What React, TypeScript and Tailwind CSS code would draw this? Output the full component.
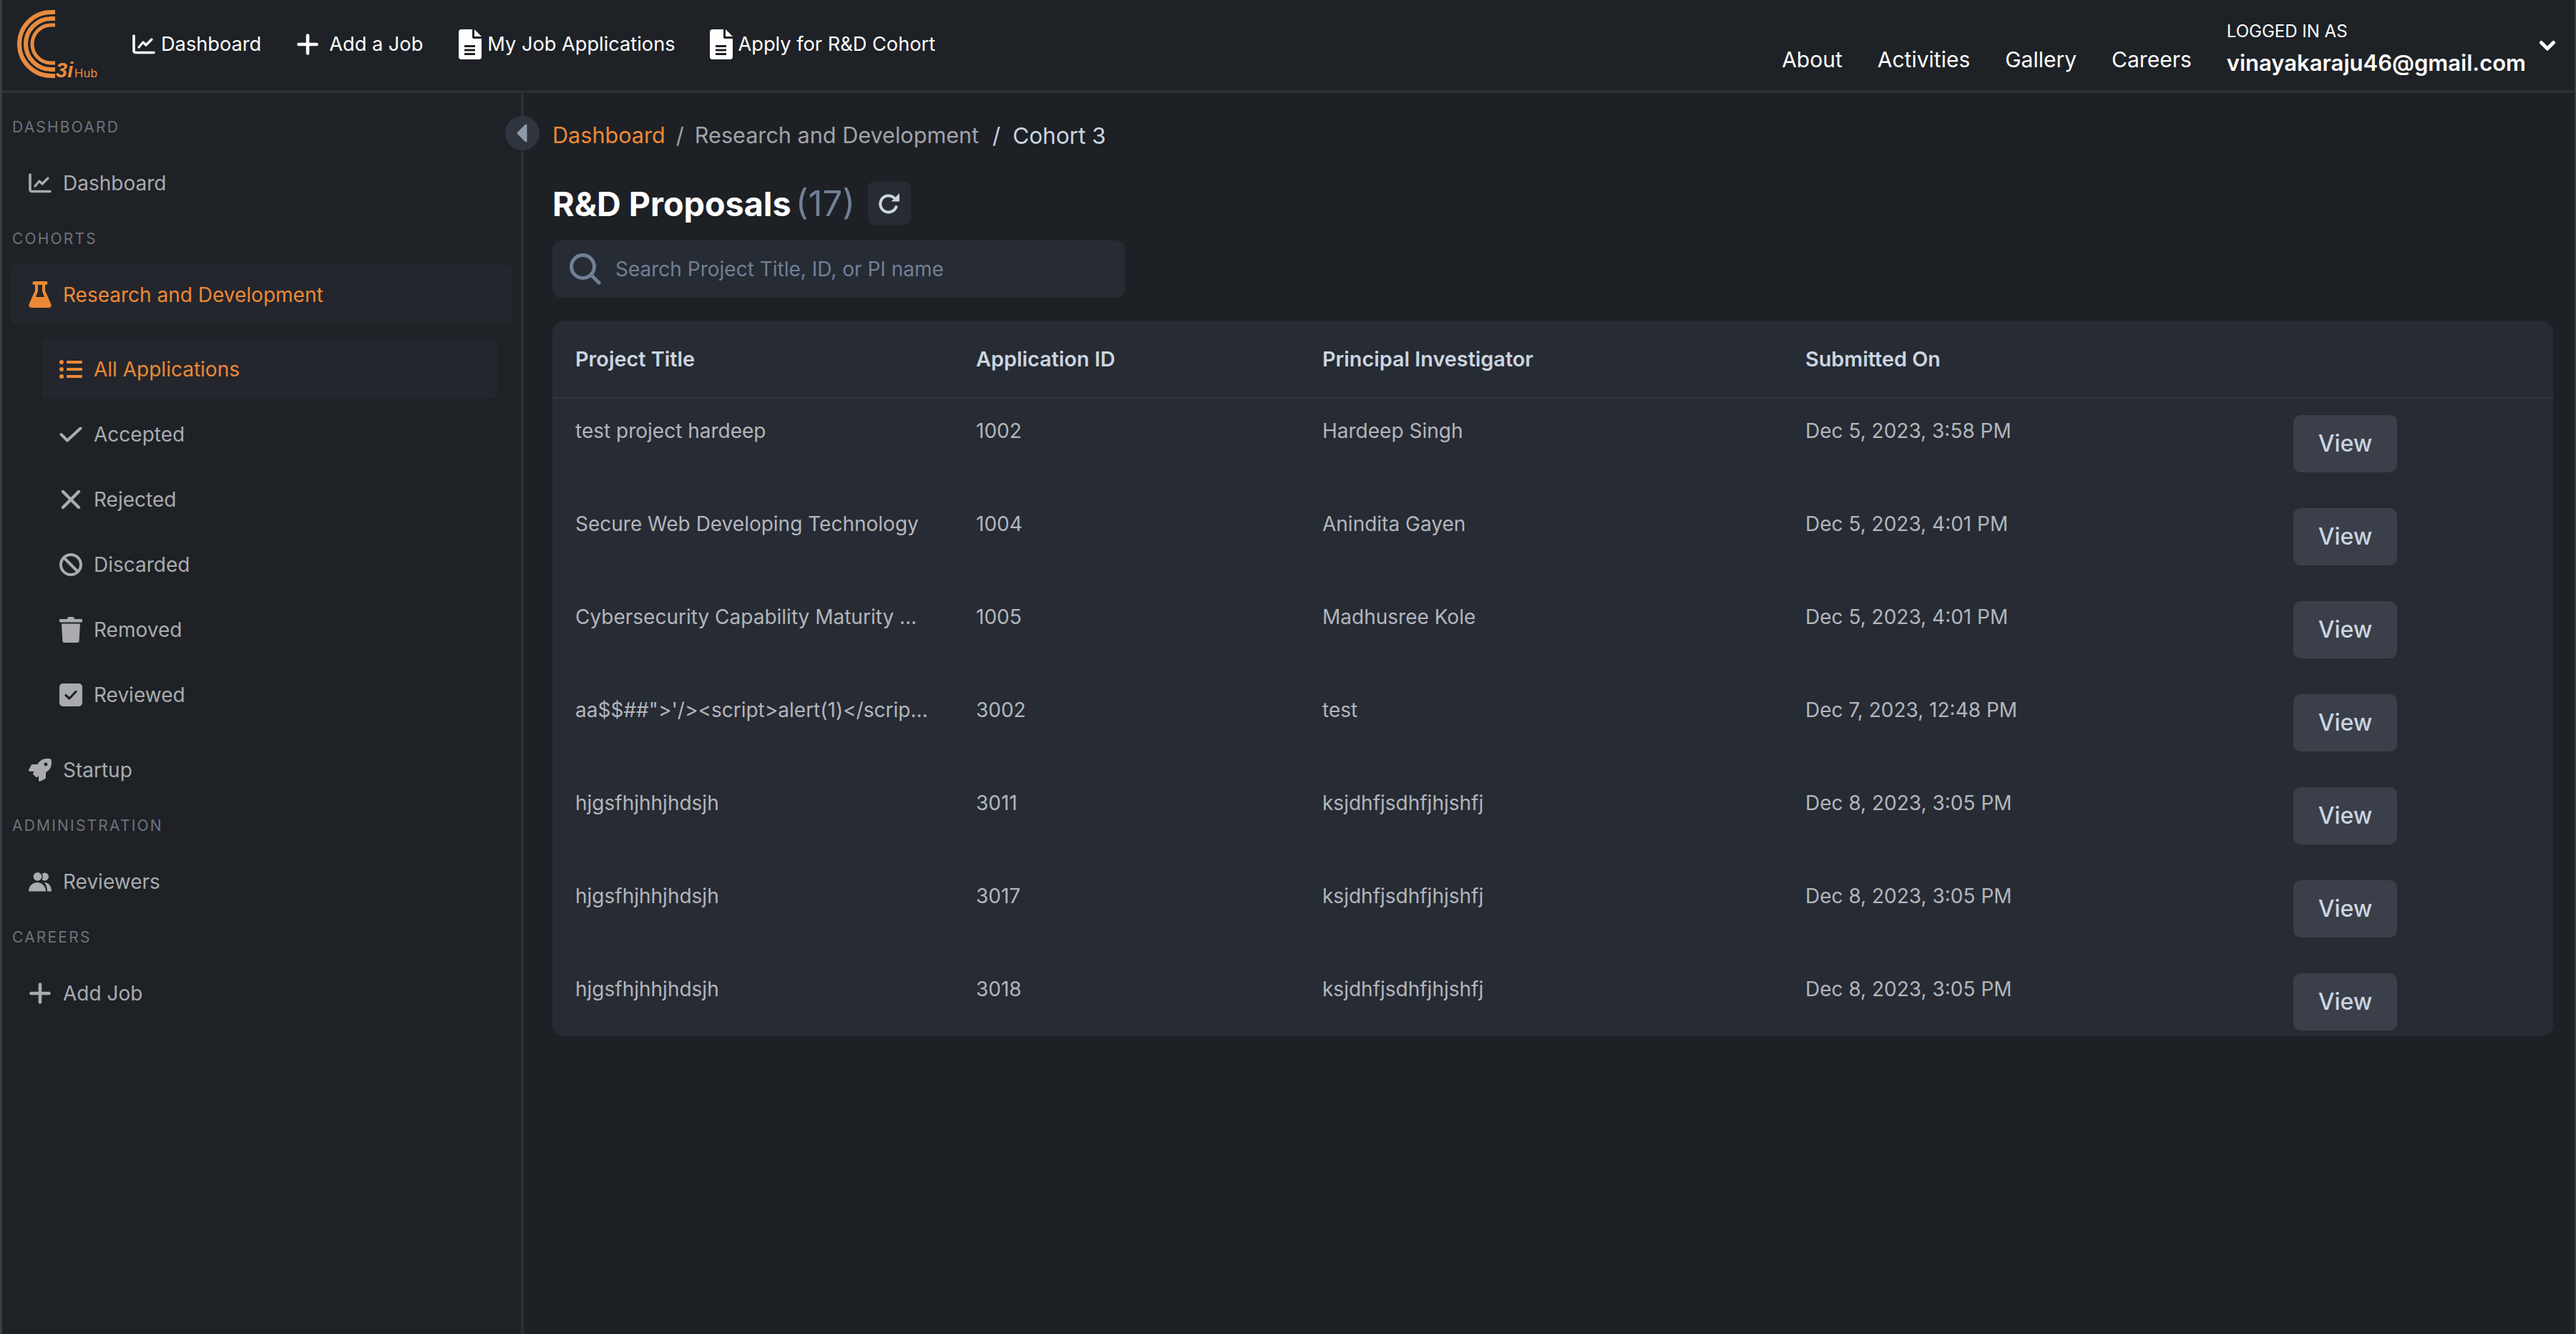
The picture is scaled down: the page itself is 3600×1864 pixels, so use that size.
import React from 'react'
import { FaListUl, FaRocket } from 'react-icons/fa'

const ROWS = [
  { title: 'test project hardeep', id: '1002', pi: 'Hardeep Singh', date: 'Dec 5, 2023, 3:58 PM' },
  { title: 'Secure Web Developing Technology', id: '1004', pi: 'Anindita Gayen', date: 'Dec 5, 2023, 4:01 PM' },
  { title: 'Cybersecurity Capability Maturity Model for Indian Organisations', id: '1005', pi: 'Madhusree Kole', date: 'Dec 5, 2023, 4:01 PM' },
  { title: `aa$$##">'/><script>alert(1)</script>`, id: '3002', pi: 'test', date: 'Dec 7, 2023, 12:48 PM' },
  { title: 'hjgsfhjhhjhdsjh', id: '3011', pi: 'ksjdhfjsdhfjhjshfj', date: 'Dec 8, 2023, 3:05 PM' },
  { title: 'hjgsfhjhhjhdsjh', id: '3017', pi: 'ksjdhfjsdhfjhjshfj', date: 'Dec 8, 2023, 3:05 PM' },
  { title: 'hjgsfhjhhjhdsjh', id: '3018', pi: 'ksjdhfjsdhfjhjshfj', date: 'Dec 8, 2023, 3:05 PM' },
]

function ChartIcon() {
  return (
    <svg width="32" height="28" viewBox="0 0 32 28" fill="none" stroke="currentColor" strokeLinecap="round" strokeLinejoin="round">
      <path d="M2 2 V23 a2.5 2.5 0 0 0 2.5 2.5 H30" strokeWidth="3.6" />
      <path d="M9 18 L15 11 L19 15 L27 7" strokeWidth="3.2" />
    </svg>
  )
}

function PlusIcon() {
  return (
    <svg width="30" height="30" viewBox="0 0 30 30" fill="none" stroke="currentColor" strokeWidth="4.6" strokeLinecap="round">
      <path d="M15 2.5 V27.5 M2.5 15 H27.5" />
    </svg>
  )
}

function FileIcon() {
  return (
    <svg width="32" height="42" viewBox="0 0 32 42" className="shrink-0">
      <path d="M4 0 H19 V11 a2 2 0 0 0 2 2 H32 V38 a4 4 0 0 1 -4 4 H4 a4 4 0 0 1 -4 -4 V4 a4 4 0 0 1 4 -4 Z M22 0 L32 10 H22 Z" fill="currentColor" />
      <path d="M8 22 H23 V25 H8 Z M8 27.5 H23 V30.5 H8 Z M8 33 H23 V36 H8 Z" fill="#1e2126" />
    </svg>
  )
}

function FlaskIcon() {
  return (
    <svg width="32" height="37" viewBox="0 0 32 37">
      <path
        fillRule="evenodd"
        fill="currentColor"
        d="M8 0 H24 a2.5 2.5 0 0 1 0 5 H23 V13 L31.4 32 a3.5 3.5 0 0 1 -3 5 H3.6 a3.5 3.5 0 0 1 -3 -5 L9 13 V5 H8 a2.5 2.5 0 0 1 0 -5 Z M13 5 V14 L10 22 H22 L19 14 V5 Z"
      />
    </svg>
  )
}

function CheckIcon() {
  return (
    <svg width="32" height="22" viewBox="0 0 32 22" fill="none" stroke="currentColor" strokeWidth="4" strokeLinecap="round" strokeLinejoin="round">
      <path d="M2.5 11 L11 19.5 L29.5 2.5" />
    </svg>
  )
}

function XIcon() {
  return (
    <svg width="28" height="28" viewBox="0 0 28 28" fill="none" stroke="currentColor" strokeWidth="4.4" strokeLinecap="round">
      <path d="M3 3 L25 25 M25 3 L3 25" />
    </svg>
  )
}

function BanIcon() {
  return (
    <svg width="32" height="32" viewBox="0 0 32 32" fill="none" stroke="currentColor" strokeWidth="4">
      <circle cx="16" cy="16" r="14" />
      <path d="M6.5 6.5 L25.5 25.5" />
    </svg>
  )
}

function TrashIcon() {
  return (
    <svg width="32" height="36" viewBox="0 0 32 36" fill="currentColor">
      <path d="M11 3 Q11 0 14 0 H18 Q21 0 21 3 H30.5 a2 2 0 0 1 0 4.5 H1.5 a2 2 0 0 1 0 -4.5 Z" />
      <path d="M3 9.5 H29 L27.6 33.5 a2.5 2.5 0 0 1 -2.5 2.5 H6.9 a2.5 2.5 0 0 1 -2.5 -2.5 Z" />
    </svg>
  )
}

function CheckSquareIcon() {
  return (
    <svg width="32" height="32" viewBox="0 0 32 32">
      <rect width="32" height="32" rx="5" fill="currentColor" />
      <path d="M9 16.5 L14 21 L23 11.5" fill="none" stroke="#1e2126" strokeWidth="3.2" strokeLinecap="round" strokeLinejoin="round" />
    </svg>
  )
}

function UsersIcon() {
  return (
    <svg width="32" height="28" viewBox="0 0 32 28" fill="currentColor">
      <circle cx="22.5" cy="7" r="5.5" />
      <path d="M22 15 C28 15 32 20 32 27.5 H26 C26 22 24.5 18 22 15 Z" />
      <circle cx="12.5" cy="6.8" r="6.6" stroke="#1e2126" strokeWidth="1.4" />
      <path d="M0 27.5 C0 20 5.5 15 12 15 C18.5 15 24 20 24 27.5 Z" />
    </svg>
  )
}

const SUB_ITEMS = [
  { label: 'All Applications', icon: <FaListUl size={32} />, active: true },
  { label: 'Accepted', icon: <CheckIcon /> },
  { label: 'Rejected', icon: <XIcon /> },
  { label: 'Discarded', icon: <BanIcon /> },
  { label: 'Removed', icon: <TrashIcon /> },
  { label: 'Reviewed', icon: <CheckSquareIcon /> },
]

function Logo() {
  return (
    <svg width="140" height="126" viewBox="3 0 140 126" className="shrink-0">
      <g fill="none" stroke="#e88b3f">
        <path d="M77 17 H71.5 A44.5 44.5 0 0 0 71.5 106 H77" strokeWidth="6" />
        <path d="M77 26 H71.5 A35.5 35.5 0 0 0 71.5 97 H77" strokeWidth="6" />
        <path d="M77 35 H71.5 A26.5 26.5 0 0 0 71.5 88 H77" strokeWidth="5" />
      </g>
      <text x="78" y="108" fill="#e88b3f" fontFamily="Liberation Sans" fontWeight="700" fontSize="29" fontStyle="italic">
        3i
      </text>
      <text x="104" y="108" fill="#e88b3f" fontFamily="Liberation Sans" fontSize="17" letterSpacing="0.4">
        Hub
      </text>
    </svg>
  )
}

function SectionLabel({ children }: { children: React.ReactNode }) {
  return (
    <div className="h-[73px] flex items-center pl-[14px] text-[21px] tracking-[2.2px] text-[#70737a]">
      {children}
    </div>
  )
}

function NavItem({ icon, label, active }: { icon: React.ReactNode; label: string; active?: boolean }) {
  return (
    <div
      className={`h-[83px] ml-[12px] mr-[12px] pl-[25px] flex items-center gap-[16px] rounded-[6px] text-[28px] ${
        active ? 'bg-[#23262c] text-[#ed8936]' : 'text-[#a9abaf]'
      }`}
    >
      <span className="w-[32px] flex justify-center shrink-0">{icon}</span>
      {label}
    </div>
  )
}

function SubItem({ icon, label, active }: { icon: React.ReactNode; label: string; active?: boolean }) {
  return (
    <div
      className={`h-[83px] pl-[25px] flex items-center gap-[16px] rounded-[6px] text-[28px] ${
        active ? 'bg-[#23262c] text-[#ed8936]' : 'text-[#a9abaf]'
      }`}
    >
      <span className="w-[32px] flex justify-center shrink-0">{icon}</span>
      {label}
    </div>
  )
}

export default function App() {
  return (
    <div className="h-[1864px] flex flex-col overflow-hidden bg-[#1d2025] border-l-[3px] border-r-[2px] border-[#3a3d44] font-['Inter',sans-serif]">
      <header className="h-[130px] shrink-0 flex justify-between bg-[#1e2126] border-b-[4px] border-[#2a2e35] text-white">
        <div className="flex items-start">
          <Logo />
          <nav className="flex items-center h-[126px] pl-[42px] pb-[2px] text-[27.2px]">
            <div className="flex items-center gap-[8px] mr-[50px]">
              <ChartIcon />
              Dashboard
            </div>
            <div className="flex items-center gap-[15px] mr-[50px]">
              <PlusIcon />
              Add a Job
            </div>
            <div className="flex items-center gap-[8px] mr-[48px]">
              <FileIcon />
              My Job Applications
            </div>
            <div className="flex items-center gap-[8px]">
              <FileIcon />
              Apply for R&amp;D Cohort
            </div>
          </nav>
        </div>
        <div className="flex items-start">
          <div className="flex gap-[49px] pt-[63px] text-[30px] leading-[40px]">
            <span>About</span>
            <span>Activities</span>
            <span>Gallery</span>
            <span>Careers</span>
          </div>
          <div className="ml-[49px] pt-[30px]">
            <div className="text-[24px] leading-[28px]">LOGGED IN AS</div>
            <div className="mt-[10px] text-[31px] leading-[40px] font-semibold">vinayakaraju46@gmail.com</div>
          </div>
          <svg width="24" height="16" viewBox="0 0 24 16" fill="none" stroke="currentColor" strokeWidth="5" strokeLinecap="round" strokeLinejoin="round" className="ml-[18px] mr-[26px] mt-[56px]">
            <path d="M3.5 3.5 L12 12 L20.5 3.5" />
          </svg>
        </div>
      </header>

      <div className="flex flex-1 min-h-0">
        <aside className="relative w-[729px] shrink-0 pt-[11px] bg-[#1e2126] border-r-[4px] border-[#2a2e35]">
          <SectionLabel>DASHBOARD</SectionLabel>
          <NavItem icon={<ChartIcon />} label="Dashboard" />
          <SectionLabel>COHORTS</SectionLabel>
          <NavItem icon={<FlaskIcon />} label="Research and Development" active />
          <div className="mt-[21px] ml-[55px] mr-[33px] flex flex-col gap-[8px]">
            {SUB_ITEMS.map(s => (
              <SubItem key={s.label} icon={s.icon} label={s.label} active={s.active} />
            ))}
          </div>
          <div className="mt-[22px]">
            <NavItem icon={<FaRocket size={32} />} label="Startup" />
          </div>
          <SectionLabel>ADMINISTRATION</SectionLabel>
          <NavItem icon={<UsersIcon />} label="Reviewers" />
          <SectionLabel>CAREERS</SectionLabel>
          <NavItem icon={<PlusIcon />} label="Add Job" />

          <button className="absolute top-[32px] right-[-26px] w-[48px] h-[48px] rounded-full bg-[#2f353e] flex items-center justify-center">
            <svg width="20" height="26" viewBox="0 0 20 26">
              <path d="M15 2 L4 13 L15 24 Z" fill="#8d99a8" stroke="#8d99a8" strokeWidth="3" strokeLinejoin="round" />
            </svg>
          </button>
        </aside>

        <main className="flex-1 min-w-0 pl-[40px] pr-[30px]">
          <div className="h-[48px] mt-[35px] flex items-center text-[30.6px]">
            <span className="text-[#ed8936]">Dashboard</span>
            <span className="mx-[15px] text-[#a0a3a8]">/</span>
            <span className="text-[#a0a3a8]">Research and Development</span>
            <span className="ml-[19px] mr-[17px] text-[#cbd5e0]">/</span>
            <span className="text-[31.5px] text-[#cbd5e0] translate-y-[1px]">Cohort 3</span>
          </div>

          <div className="mt-[41px] h-[60px] flex items-center">
            <h1 className="text-[46.7px] font-bold text-white translate-y-[1px]">
              R&amp;D Proposals <span className="ml-[-5px] text-[49px] font-normal text-[#718096]">(17)</span>
            </h1>
            <button className="ml-[18px] w-[60px] h-[60px] rounded-[8px] bg-[#272b33] flex items-center justify-center text-[#cbd5e0]">
              <svg width="30" height="30" viewBox="0 0 30 30">
                <path d="M21 7 A 11.5 11.5 0 1 0 24.5 20" fill="none" stroke="currentColor" strokeWidth="4" strokeLinecap="round" />
                <path d="M29 1 V12.5 H17.5 Z" fill="currentColor" />
              </svg>
            </button>
          </div>

          <div className="mt-[22px] w-[800px] h-[80px] rounded-[12px] bg-[#272b33] flex items-center pl-[24px] gap-[20px] text-[#718096]">
            <svg width="44" height="44" viewBox="0 0 44 44" fill="none" stroke="currentColor" strokeWidth="5" strokeLinecap="round">
              <circle cx="18.5" cy="18.5" r="16" />
              <path d="M30.5 30.5 L41 41" />
            </svg>
            <span className="text-[28px]">Search Project Title, ID, or PI name</span>
          </div>

          <div className="mt-[32px] rounded-[16px] bg-[#272b33]">
            <div className="h-[109px] grid grid-cols-[560px_484px_675px_682px_1fr] items-center border-b-[2px] border-[#31353e] text-[28.8px] font-semibold text-[#cbd5e0]">
              <div className="pl-[32px]">Project Title</div>
              <div className="pl-[32px]">Application ID</div>
              <div className="pl-[32px]">Principal Investigator</div>
              <div className="pl-[32px]">Submitted On</div>
              <div />
            </div>
            {ROWS.map(r => (
              <div key={r.id} className="h-[130px] last:h-[111px] grid grid-cols-[560px_484px_675px_682px_1fr] text-[28px] leading-[40px] text-[#b2b6bd]">
                <div className="pl-[32px] pr-[32px] pt-[25px] truncate">{r.title}</div>
                <div className="pl-[32px] pt-[25px]">{r.id}</div>
                <div className="pl-[32px] pt-[25px]">{r.pi}</div>
                <div className="pl-[32px] pt-[25px]">{r.date}</div>
                <div className="pl-[32px] pt-[23px]">
                  <button className="w-[145px] h-[80px] rounded-[10px] bg-[#3a3f4a] text-[32px] font-medium text-[#cbd5e0]">
                    View
                  </button>
                </div>
              </div>
            ))}
          </div>
        </main>
      </div>
    </div>
  )
}
